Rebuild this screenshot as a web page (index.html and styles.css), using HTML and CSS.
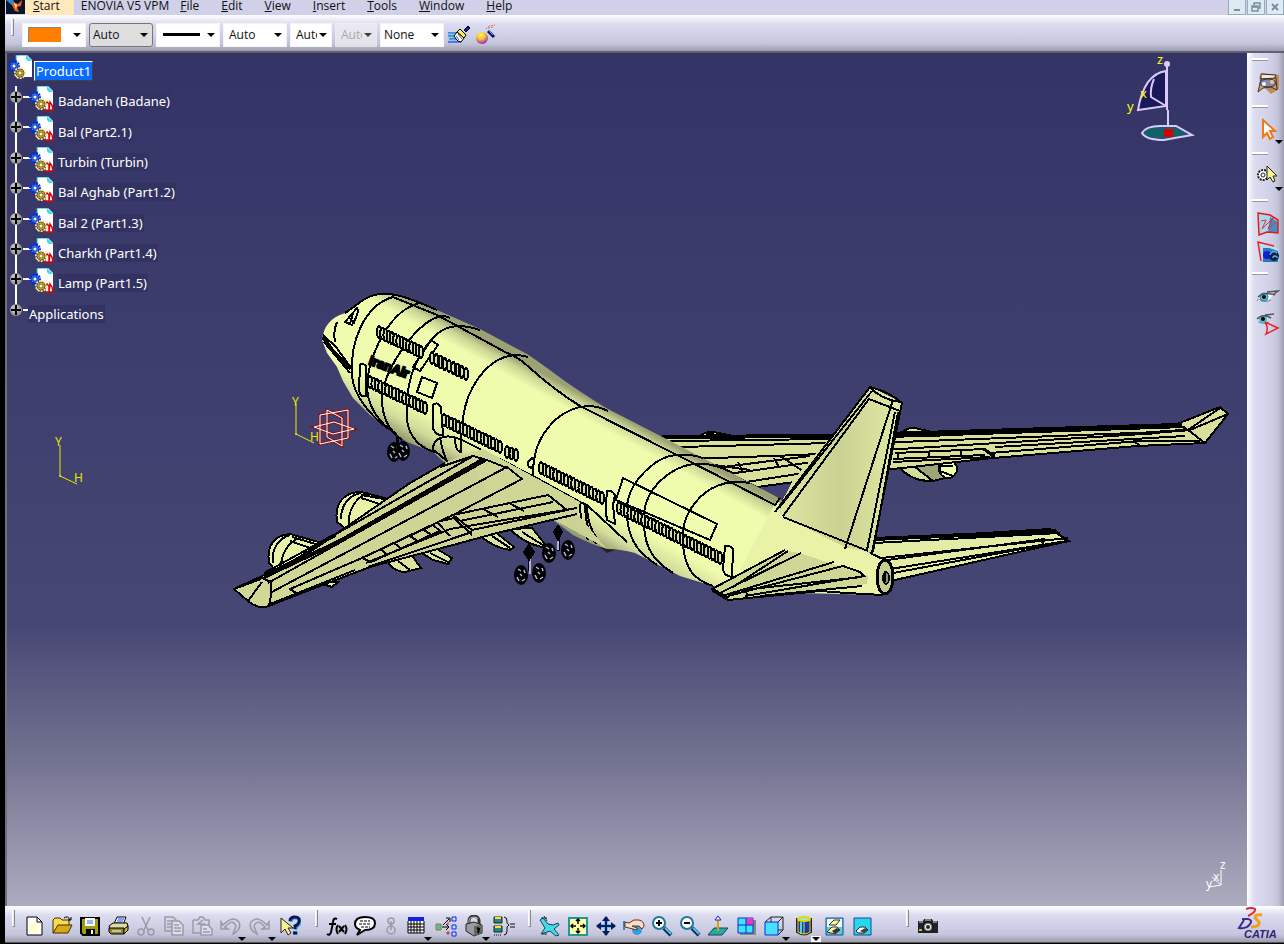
FILE: index.html
```
<!DOCTYPE html>
<html lang="en">
<head>
    <meta charset="UTF-8">
    <meta name="viewport" content="width=device-width, initial-scale=1.0">
    <title>CATIA V5 - Product1</title>
    <link rel="stylesheet" href="styles.css">
</head>
<body>
    <div class="app">
        <header class="menubar">
            <svg class="app-icon" width="19" height="14" viewBox="0 0 19 14">
                <rect width="19" height="14" fill="#08142c"/>
                <path d="M0 0h7l3 5-3 1z" fill="#2a8fd0"/>
                <path d="M7 2l5 2 4-4-1 6-4 1 2 5-4-1-3-6z" fill="#e8621c"/>
                <path d="M8 3l3 2-1 4z" fill="#fff0d0"/>
            </svg>
            <nav class="menu">
                <button class="menu-item start"><u>S</u>tart</button>
                <button class="menu-item enovia">ENOVIA V5 VPM</button>
                <button class="menu-item"><u>F</u>ile</button>
                <button class="menu-item"><u>E</u>dit</button>
                <button class="menu-item"><u>V</u>iew</button>
                <button class="menu-item"><u>I</u>nsert</button>
                <button class="menu-item"><u>T</u>ools</button>
                <button class="menu-item"><u>W</u>indow</button>
                <button class="menu-item"><u>H</u>elp</button>
            </nav>
            <div class="window-buttons">
                <button aria-label="Minimize"><svg width="16" height="13"><path d="M5 9h6" stroke="#7b8ea0" stroke-width="2"/></svg></button>
                <button aria-label="Restore"><svg width="16" height="13"><path d="M6 4V2h6v5h-2M4 5h6v5H4zM4 6h6" fill="none" stroke="#7b8ea0" stroke-width="1.5"/></svg></button>
                <button aria-label="Close"><svg width="16" height="13"><path d="M5 3l6 6M11 3l-6 6" stroke="#7b8ea0" stroke-width="2"/></svg></button>
            </div>
        </header>

        <div class="toolbar">
            <span class="grip"></span>
            <select class="combo fill-color" aria-label="Fill color"><option></option></select>
            <select class="combo raised" aria-label="Transparency"><option>Auto</option></select>
            <select class="combo line-type" aria-label="Line type"><option></option></select>
            <select class="combo" aria-label="Line weight"><option>Auto</option></select>
            <select class="combo narrow" aria-label="Point symbol"><option>Auto</option></select>
            <select class="combo narrow" aria-label="Rendering style" disabled><option>Auto</option></select>
            <select class="combo layer" aria-label="Layer"><option>None</option></select>
            <button class="tool" aria-label="Painter">
                <svg width="24" height="22" viewBox="0 0 24 22">
                    <path d="M1 9h10M1 12h9M2 15h9M1 18h13" stroke="#0020e0" stroke-width="1"/>
                    <path d="M1 10h9M1 13h9M2 16h9" stroke="#20d8f0"/>
                    <path d="M17 6l4-4 2 2-4 4z" fill="#1018c0" stroke="#000"/>
                    <path d="M13 5l6 6-2 3-7-6z" fill="#fff24a" stroke="#000"/>
                    <path d="M10 8l7 6-3 4-3-1-2-2-2-3z" fill="#fff" stroke="#000"/>
                    <path d="M11 10l4 5M9 12l3 4" stroke="#555"/>
                </svg>
            </button>
            <button class="tool" aria-label="Wizard">
                <svg width="24" height="22" viewBox="0 0 24 22">
                    <defs><radialGradient id="ball" cx=".4" cy=".25" r=".8"><stop offset="0" stop-color="#fff36a"/><stop offset=".45" stop-color="#f8c030"/><stop offset="1" stop-color="#8c14d8"/></radialGradient></defs>
                    <circle cx="7" cy="14" r="6" fill="url(#ball)"/>
                    <path d="M13 7l6 6" stroke="#101060" stroke-width="3"/>
                    <path d="M13 6l5 5" stroke="#5a8cf0"/>
                    <path d="M11 5l3-3 6-1M13 4l6-1" stroke="#e07050" stroke-dasharray="2 1" fill="none"/>
                </svg>
            </button>
        </div>

        <main class="workspace">
            <section class="viewport">
                <svg class="scene" viewBox="7 53 1240 853" preserveAspectRatio="xMinYMin slice">
                    <defs>
                        <linearGradient id="body" gradientUnits="userSpaceOnUse" x1="608" y1="409" x2="546" y2="521">
                            <stop offset="0" stop-color="#9ba172"/><stop offset=".06" stop-color="#ccd595"/><stop offset=".15" stop-color="#effcad"/>
                            <stop offset=".7" stop-color="#effcad"/><stop offset=".86" stop-color="#d2db9a"/><stop offset="1" stop-color="#8c9268"/>
                        </linearGradient>
                        <linearGradient id="wing" x1="0" y1="1" x2="1" y2="0"><stop offset="0" stop-color="#d2d997"/><stop offset="1" stop-color="#c8cf91"/></linearGradient>
                        <linearGradient id="fin" x1="0" x2="1"><stop offset="0" stop-color="#dde6a0"/><stop offset=".5" stop-color="#cad292"/><stop offset="1" stop-color="#e0eaa3"/></linearGradient>
                        <g id="wheel"><ellipse rx="7" ry="10" fill="#000"/><path d="M-3-6l3 2M-4 2l2 4M1 6l3-2M3-5l1 3M-1-1l2 2" stroke="#b8b8e0" stroke-width="1.5"/></g>
                    </defs>

                    <!-- far wing -->
                    <g class="edges">
                        <path d="M903 432q6-6 16-3l18 4zM700 436q7-6 18-3l15 3z" fill="#dce5a0"/>
                        <path d="M899 467C908 477 920 483 936 480L945 465Z" fill="#d5dd9a"/>
                        <path d="M915 467l18 14 16-4-9-14z" fill="#9fa574"/>
                        <circle cx="948" cy="469" r="9" fill="#effcad"/>
                        <path d="M940 463v8l13 5M938 466h15"/>
                        <path d="M658 437L827 435L1177 424L1220 407L1228 414L1205 443L1137 446L993 458L893 469L757 487Z" fill="#d8e09b"/>
                        <path d="M1177 424L1188 430L1220 408M1190 430L1228 414M1188 430L1205 443M1190 430L1160 431"/>
                        <path class="heavy" d="M662 437L830 436L895 435L1040 430L1182 425"/>
                        <path class="heavy" d="M900 433l40 2M706 435l30 2"/>
                        <path d="M670 441L830 439L1185 427M680 447L830 443L900 442L1185 431M685 459L800 455L900 449L1160 433M995 447L1185 436M990 453L1140 441L1200 441M895 453L985 449L995 456M893 459L985 455M893 462L990 457M1133 441l8 5M983 449l12 9M929 452v6M961 450v6M898 453v6"/>
                        <path d="M715 468L810 456M728 474L820 461M740 483L810 472M738 462l5 10M774 458l5 9M780 456l23 15M700 463l50 7"/>
                    </g>

                    <!-- far stabilizer -->
                    <g class="edges">
                        <path d="M872 540L1050 529L1069 541L1028 550L895 580L872 577Z" fill="#e2eca5"/>
                        <path class="heavy" d="M874 539L1056 531"/>
                        <path d="M874 543L1060 533M872 559L1068 538M872 562L1045 539M890 569L1067 541M893 573L1038 546M1038 539l6 5M1056 531l10 10"/>
                    </g>

                    <!-- engines and landing gear below the wing -->
                    <g class="edges">
                        <path d="M337 522C334 502 345 492 361 492L396 501L350 532Z" fill="#e7f1a7"/>
                        <path d="M341 519c0-14 8-24 20-26M349 528c-2-15 5-30 19-35M361 495l35 6M361 498l25 8"/>
                        <path d="M269 563C266 544 276 535 290 534L322 543L276 571Z" fill="#e7f1a7"/>
                        <path d="M273 563c-2-14 6-25 17-28M281 568c0-14 6-25 20-31M292 537l27 8M290 541l20 7"/>
                        <path d="M320 583l12 4 6-5z" fill="#e7f1a7"/>
                        <path d="M387 561L410 553L421 568L405 572Q394 572 387 561ZM420 552L432 546L452 558L448 564L433 560ZM480 536L494 531L514 547L510 550Q495 548 480 536ZM510 529L532 528L548 548Q525 545 510 529Z" fill="#dce5a0"/>
                        <path d="M398 561l12 9M430 553l18 9M492 536l18 12M522 532l24 15"/>
                        <path d="M397 434v12M529 545v26M558 527v24" stroke-width="3"/>
                        <path d="M530 556v18M558 540v10" stroke="#b0b0d8"/>
                        <path d="M529 545l5 7-5 8-5-8zM558 526l4 6-4 8-4-8z" fill="#000"/>
                    </g>
                    <use href="#wheel" x="394" y="452"/><use href="#wheel" x="403" y="451"/>
                    <use href="#wheel" x="521" y="575"/><use href="#wheel" x="539" y="573"/>
                    <use href="#wheel" x="549" y="553"/><use href="#wheel" x="568" y="550"/>

                    <!-- fuselage -->
                    <path d="M597 545l10 8 8-3 10-1-4-8z" fill="#222"/>
                    <path fill="url(#body)" d="M322 340C324 326 330 318 345 313C358 305 366 294 383 294C400 293 420 303 437 310L480 329L527 354C548 368 575 390 608 409L680 446L777 497L845 545L885 560L885 595L847 593L713 586L680 576L635 553Q620 549 607 549Q590 544 573 535L540 510L445 463L433 452L407 442L387 428L370 415L353 398L343 381L337 367L327 353Z"/>
                    <path fill="#e8f3a8" d="M777 500L790 515L885 560V595L800 593L740 570Z"/>
                    <g class="edges">
                        <path d="M345 313C358 305 366 294 383 294C400 293 420 303 437 310"/>
                        <path d="M393 297C365 305 350 340 352 375C353 395 370 415 387 428"/>
                        <path d="M420 303C390 310 372 350 367 380C365 405 380 425 397 434"/>
                        <path d="M450 318C428 305 385 365 382 395C381 415 388 430 402 440"/>
                        <path d="M480 330C465 325 447 322 433 338C413 360 405 385 407 420C409 437 420 448 435 452"/>
                        <path d="M528 357C515 353 500 355 485 370C465 392 461 415 461 453"/>
                        <path d="M608 411C590 402 573 405 555 420C537 438 532 455 533 483"/>
                        <path d="M703 458C685 452 665 453 650 467C632 482 625 500 627 518C630 545 642 555 657 565"/>
                        <path d="M733 473C710 461 690 460 670 473C650 487 642 505 644 525C645 550 655 562 673 573"/>
                        <path d="M750 483C728 479 708 486 695 503C683 518 682 530 683 545C685 570 695 580 713 586"/>
                        <path d="M393 297L437 315L507 353Q517 356 530 368Q553 389 580 406L677 455L730 482L775 505L780 498"/>
                        <path d="M462 440L533 476L580 502L587 505L627 542"/>
                        <path d="M337 322q-4 10-2 20M345 322L357 308Q360 312 352 325ZM350 318l4 6M353 313l-3 11"/>
                        <path class="heavy" d="M323 337L332 350L351 369"/>
                        <path d="M323 335L336 347L352 369M324 342L340 361L350 373"/>
                        <path d="M360 365q2-3 6 1v30q-5 2-7-5zM431 340l7 5-18 26-7-4zM422 377l15 6-5 15-15-6zM433 405q4-4 8 2l2 28q-6 1-10-6zM607 491q5-1 8 4l-2 10 2 19-8-4q-2-10 0-29zM623 478L717 524L710 540L616 500ZM725 546q5-1 8 3l-1 28q-8-1-9-8zM528 462a3 5 0 1 0 4-4z"/>
                        <path d="M462 440q-18-8-27 2-5 10 0 9l12 10M440 437q2 15 8 26M455 438q0 12 5 14"/>
                        <path d="M580 502q0 25 8 38M585 504q0 25 11 40M587 504q0 25 15 41M562 521l34 15"/>
                    </g>
                    <g id="cabinWindows" class="cabin-windows"></g>
                    <text class="livery" transform="translate(368 364) rotate(20)">IranAir</text>

                    <!-- near wing -->
                    <g class="edges">
                        <path d="M467 453L445 463L410 483L310 552L260 577L234 589L248 601Q256 608 266 607L320 586L370 567L453 545L497 533L577 514L606 548L540 512Z" stroke="none" fill="url(#wing)"/>
                        <path stroke="none" d="M467 453L483 449L580 502L577 517L500 520Z" fill="#ced696"/>
                        <path d="M445 463L410 483L310 552L260 577L234 589L248 601Q256 608 266 607L320 586L370 567L453 545L497 533L577 514"/>
                        <path class="heavy" d="M264 577L340 541L484 459M310 549L335 535"/>
                        <path d="M440 467L473 456L487 460M268 583L487 460M264 573L345 529L473 456M270 593L507 467M507 467L522 479L453 515L362 558L290 589L296 593M487 460l20 8M260 577l11 5q1 12-2 24M248 601l14-19M234 589l27-10M270 604L355 570"/>
                        <path d="M453 515L548 495L567 510L472 530Z"/>
                        <path d="M460 521L553 502M483 509l15 8M509 503l15 8M437 522l13 14M437 522l17-4 18 17M368 567L472 532M366 563L450 529L577 508"/>
                        <path d="M362 558L433 525L440 531L371 562ZM380 549l8 6M394 543l8 6M410 536l9 6M424 530l9 6M370 562l-8-5"/>
                    </g>

                    <!-- fin -->
                    <g class="edges">
                        <path stroke="none" d="M870 386L902 403L900 412L872 553L845 547L783 517L777 511L793 480L837 430Z" fill="url(#fin)"/>
                        <path d="M775 512L870 387Q890 392 902 403L900 412L872 553M783 516L869 399L900 411M893 400L845 549M783 517L868 551M895 412L867 550M779 508L872 391M870 387q10 12 30 15"/>
                        <path d="M898 412L873 552"/>
                    </g>

                    <!-- near stabilizer and tail cone -->
                    <g class="edges">
                        <path stroke="none" fill="#cfd796" d="M712 589L783 550L800 553L835 565L868 576L867 584L820 590L728 600Z"/>
                        <path d="M870 553L885 560M883 595L847 593L820 591L728 600L712 589L785 550M720 593L801 553M733 587L788 551M722 596L834 562M728 596L843 566L860 572L864 576L745 596M742 590L862 577M744 590l4 5M862 586L760 596"/>
                        <path class="heavy" d="M713 590L728 599"/>
                        <ellipse cx="885" cy="577" rx="8" ry="17" fill="#c6ce90" stroke-width="3"/>
                        <ellipse cx="886" cy="578" rx="3" ry="6" fill="#8f9568"/>
                        <path d="M885 573v9"/>
                    </g>

                    <!-- reference planes and sketch axes -->
                    <g fill="none" stroke="#8c1010" stroke-width="3">
                        <path d="M320 415L348 410V438L320 444ZM327 410L342 418V446L327 437ZM314 427L334 422L354 429L333 434Z"/>
                    </g>
                    <g fill="none" stroke="#fff">
                        <path d="M320 415L348 410V438L320 444ZM327 410L342 418V446L327 437ZM314 427L334 422L354 429L333 434Z"/>
                    </g>
                    <g class="axis">
                        <path d="M296 403V434L314 443M60 445V476L77 484"/>
                        <circle cx="296" cy="434" r="1"/><circle cx="60" cy="476" r="1"/>
                        <text x="292" y="406">Y</text><text x="310" y="441">H</text>
                        <text x="55" y="446">Y</text><text x="74" y="482">H</text>
                    </g>

                    <!-- compass -->
                    <g fill="none" stroke="#dcc8ff" stroke-width="2">
                        <path d="M1166 71Q1144 74 1138 110L1166 106Z" fill="#1a1a58"/>
                        <path d="M1154 79Q1150 88 1151 97L1166 106M1167 65V110M1168 110V128"/>
                        <path d="M1142 133Q1146 126 1160 126L1176 126L1192 135Q1174 138 1164 140Q1146 140 1142 133Z" fill="#146068"/>
                        <circle cx="1167" cy="64" r="3" fill="#dcc8ff" stroke="none"/>
                        <rect x="1164" y="129" width="9" height="8" fill="#d80000" stroke="none"/>
                    </g>
                    <g class="compass-text"><text x="1157" y="64">z</text><text x="1140" y="98">x</text><text x="1127" y="111">y</text></g>
                    <g class="triad"><path d="M1221 870V885L1209 887M1221 885L1212 877"/><text x="1220" y="869">z</text><text x="1213" y="881">x</text><text x="1206" y="888">y</text></g>
                </svg>

                <svg class="defs" width="0" height="0">
                    <defs>
                        <g id="gears">
                            <circle cx="6" cy="11" r="5" fill="none" stroke="#0030e8" stroke-width="2" stroke-dasharray="2 1"/>
                            <circle cx="6" cy="11" r="4" fill="#58b8ff" stroke="#0028d0"/>
                            <path d="M4 9h4v4H4z" fill="#e8ffff" stroke="#0010a0"/>
                            <circle cx="12" cy="18" r="5" fill="none" stroke="#ffe78a" stroke-width="2" stroke-dasharray="2 1"/>
                            <circle cx="12" cy="18" r="4" fill="#ffe890" stroke="#6a5810"/>
                            <path d="M10 16h4v4h-4z" fill="#fff8c0" stroke="#5a4a08"/>
                        </g>
                        <g id="sheet"><path d="M8 0h11l5 5v17H8z" fill="#fff"/><path d="M8 8V0h11" fill="none" stroke="#00b0b8"/><path d="M18 0l6 6h-4l-2-2z" fill="#30e0f0"/></g>
                        <g id="part"><use href="#sheet"/><path d="M16 24v-5l2-3 2 2v6zM20 24l1-8 2 3 1 5z" fill="#fff" stroke="#e00000" stroke-width="1.5"/><use href="#gears"/></g>
                        <g id="node"><circle cx="7" cy="7" r="6" fill="#999"/><circle cx="6" cy="6" r="4" fill="#bbb"/><path d="M7 2v10M2 7h10" stroke="#000" stroke-width="2"/></g>
                    </defs>
                </svg>

                <div class="tree">
                    <div class="tree-root">
                        <svg width="25" height="25" viewBox="1 0 25 25"><use href="#sheet"/><use href="#gears"/></svg>
                        <a href="#product" class="selected">Product1</a>
                    </div>
                    <ul class="tree-list">
                        <li><svg width="48" height="26" viewBox="0 0 48 26"><path d="M14 11h8" stroke="#fff" stroke-width="2"/><use href="#node" y="4"/><use href="#part" x="20"/></svg><a href="#badaneh">Badaneh (Badane)</a></li>
                        <li><svg width="48" height="26" viewBox="0 0 48 26"><path d="M14 11h8" stroke="#fff" stroke-width="2"/><use href="#node" y="4"/><use href="#part" x="20"/></svg><a href="#bal">Bal (Part2.1)</a></li>
                        <li><svg width="48" height="26" viewBox="0 0 48 26"><path d="M14 11h8" stroke="#fff" stroke-width="2"/><use href="#node" y="4"/><use href="#part" x="20"/></svg><a href="#turbin">Turbin (Turbin)</a></li>
                        <li><svg width="48" height="26" viewBox="0 0 48 26"><path d="M14 11h8" stroke="#fff" stroke-width="2"/><use href="#node" y="4"/><use href="#part" x="20"/></svg><a href="#bal-aghab">Bal Aghab (Part1.2)</a></li>
                        <li><svg width="48" height="26" viewBox="0 0 48 26"><path d="M14 11h8" stroke="#fff" stroke-width="2"/><use href="#node" y="4"/><use href="#part" x="20"/></svg><a href="#bal2">Bal 2 (Part1.3)</a></li>
                        <li><svg width="48" height="26" viewBox="0 0 48 26"><path d="M14 11h8" stroke="#fff" stroke-width="2"/><use href="#node" y="4"/><use href="#part" x="20"/></svg><a href="#charkh">Charkh (Part1.4)</a></li>
                        <li><svg width="48" height="26" viewBox="0 0 48 26"><path d="M14 11h8" stroke="#fff" stroke-width="2"/><use href="#node" y="4"/><use href="#part" x="20"/></svg><a href="#lamp">Lamp (Part1.5)</a></li>
                        <li><svg width="19" height="26" viewBox="0 0 19 26"><path d="M14 11h5" stroke="#fff" stroke-width="2"/><use href="#node" y="4"/></svg><a href="#applications">Applications</a></li>
                    </ul>
                </div>
            </section>

            <aside class="sidebar">
                <div class="side-group">
                    <button aria-label="Workbench"><svg width="24" height="24" viewBox="0 0 24 24"><path d="M3 7l3-5 17 2v14l-8 5-6-6z" fill="#c08a50"/><path d="M5 3l15 1-2 4H5z" fill="#eee8e0" stroke="#3a2a20"/><path d="M2 21l3-13 15-1 1 12-6-3-8 1z" fill="#c9a070" stroke="#4a3020"/><ellipse cx="12" cy="12" rx="8" ry="4" fill="#8a86a8" stroke="#3a3040"/><circle cx="8" cy="13" r="2" fill="#fff"/><circle cx="16" cy="11" r="2" fill="#e8c890"/></svg></button>
                </div>
                <div class="side-group">
                    <button aria-label="Select"><svg width="24" height="24" viewBox="0 0 24 24"><path d="M7 2v17l4-4 3 6 3-2-3-6h5z" fill="#fff" stroke="#f07818" stroke-width="2"/></svg><i class="drop"></i></button>
                </div>
                <div class="side-group">
                    <button aria-label="Smart pick"><svg width="24" height="24" viewBox="0 0 24 24"><circle cx="7" cy="10" r="5" fill="#fff" stroke="#222" stroke-width="2" stroke-dasharray="2 1"/><circle cx="7" cy="10" r="2" fill="none" stroke="#222"/><path d="M11 1v14l3-3 3 5 2-1-2-5h4z" fill="#f6f38c" stroke="#222"/></svg><i class="drop"></i></button>
                </div>
                <div class="side-group">
                    <button aria-label="Sketch"><svg width="24" height="24" viewBox="0 0 24 24"><path d="M2 1l12 1 8 6v13l-11-1-8 3z" fill="#a8d8f0"/><path d="M14 5l8 5v11l-10-1z" fill="#4090c8"/><path d="M2 1l12 2 8 5v13l-11-1-8 3z" fill="none" stroke="#e81818" stroke-width="1.5"/><path d="M5 9l5-1-4 9L17 6l-5 11 8-7" fill="none" stroke="#e83030"/></svg></button>
                    <button aria-label="Capture"><svg width="24" height="24" viewBox="0 0 24 24"><path d="M3 3h10l9 6v13H6z" fill="#b8dcf0"/><path d="M5 21L2 2l16 4" fill="none" stroke="#e82020" stroke-width="1.5"/><path d="M7 8h6l9 3v11H7z" fill="#2a78b8"/><circle cx="11" cy="15" r="4" fill="#1020d8"/><circle cx="18" cy="16" r="5" fill="#0c2440"/><path d="M14 15a4 4 0 0 1 7-2M17 18a2 2 0 0 1 4 0" stroke="#60b0e8" stroke-width="1.5" fill="none"/></svg></button>
                </div>
                <div class="side-group">
                    <button aria-label="Hide"><svg width="24" height="24" viewBox="0 0 24 24"><path d="M2 14q6-7 16-5-5 8-15 7z" fill="#fff"/><circle cx="8" cy="12" r="4" fill="#50c8e8" stroke="#2880a0"/><circle cx="8" cy="12" r="2" fill="#000"/><path d="M2 12Q8 6 19 10M11 7l11-1-4 3" fill="none" stroke="#555" stroke-width="1.5"/><path d="M1 16q1-4 4 0 6 2 10-1" fill="none" stroke="#888"/></svg></button>
                    <button aria-label="Swap visible space"><svg width="24" height="24" viewBox="0 0 24 24"><circle cx="7" cy="6" r="4" fill="#40c0e0"/><circle cx="7" cy="6" r="2" fill="#000"/><path d="M1 6Q7 0 15 5M9 2l9-1" fill="none" stroke="#555" stroke-width="1.5"/><path d="M2 9q6 3 11 0" fill="none" stroke="#888"/><path d="M9 9l13 6-12 6q3-6-1-12" fill="none" stroke="#e82020" stroke-width="1.5"/></svg></button>
                </div>
            </aside>
        </main>

        <footer class="bottombar">
            <div class="tools standard">
                <span class="grip"></span>
                <button aria-label="New"><svg viewBox="0 0 22 22"><path d="M4 2h10l5 5v13H4z" fill="#fff" stroke="#000"/><path d="M6 7h9v11H6z" fill="#ffffd0"/><path d="M14 2v5h5" fill="none" stroke="#000"/></svg></button>
                <button aria-label="Open"><svg viewBox="0 0 22 22"><path d="M2 18V5l2-2h5l2 2h7v5" fill="#f8dc48" stroke="#3a3000"/><path d="M2 18L7 10h14l-4 8z" fill="#d8a818" stroke="#3a3000"/><path d="M13 3q4-3 6 2M17 5h3V2" fill="none" stroke="#000"/></svg></button>
                <button aria-label="Save"><svg viewBox="0 0 22 22"><path d="M2 3h18v17H4l-2-2z" fill="#a09c10" stroke="#000" stroke-width="2"/><path d="M6 3h10v8H6z" fill="#fff"/><path d="M8 6h6M8 8h6" stroke="#3070e0"/><path d="M7 14h9v6H7z" fill="#000"/><path d="M12 15h2v4h-2z" fill="#fff"/></svg></button>
                <button aria-label="Print"><svg viewBox="0 0 22 22"><path d="M7 9l3-7h9l-3 8" fill="#fff" stroke="#000"/><path d="M11 4h6M10 6h6M9 8h6" stroke="#1040f0"/><path d="M2 11l4-3h14l1 3-3 4H3z" fill="#e0dca0" stroke="#000"/><path d="M2 13h15v6H4l-2-2z" fill="#8c8830" stroke="#000"/><path d="M17 19l4-4v-4l-4 3z" fill="#c0bc40" stroke="#000"/><path d="M5 16h9" stroke="#fff"/></svg></button>
                <button aria-label="Cut" disabled><svg class="dim" viewBox="0 0 22 22"><path d="M7 2l6 13M15 2L9 15"/><circle cx="6" cy="17" r="3"/><circle cx="16" cy="17" r="3"/></svg></button>
                <button aria-label="Copy" disabled><svg class="dim" viewBox="0 0 22 22"><path d="M2 2h8l3 3v11H2zM4 6h5M4 9h5M4 12h5"/><path d="M9 6h7l4 4v10H9zM11 10h5M11 13h7M11 16h7" fill="#dcdcec"/></svg></button>
                <button aria-label="Paste" disabled><svg class="dim" viewBox="0 0 22 22"><path d="M2 5h5l2-3h3l2 3h4v5M2 5v13h8M12 5l-5 4h7"/><path d="M10 10h7l4 4v6H10zM12 14h4M12 17h7" fill="#dcdcec"/></svg></button>
                <button class="wide" aria-label="Undo" disabled><svg class="dim" viewBox="0 0 22 22"><path d="M2 7v7h7l-3-2q8-9 11-1l-3 8q9-5 6-12-6-7-16 3z"/></svg><i class="drop"></i></button>
                <button class="wide" aria-label="Redo" disabled><svg class="dim" viewBox="0 0 22 22"><path d="M20 7v7h-7l3-2Q8 3 5 11l3 8Q-1 14 2 7q6-7 16 3z"/></svg><i class="drop"></i></button>
                <button aria-label="What's this"><svg viewBox="0 0 22 22"><path d="M2 3v15l4-4 3 6 3-2-3-5h5z" fill="#f8f090" stroke="#222"/><path d="M12 7q0-4 5-4t4 5q-1 3-4 4v3M15 18h4" fill="none" stroke="#30b8c8" stroke-width="3"/><path d="M11 6q0-4 5-4t4 5q-1 3-4 4v3M14 18h4" fill="none" stroke="#101060" stroke-width="3"/></svg></button>
            </div>
            <div class="tools knowledge">
                <span class="grip"></span>
                <button aria-label="Formula"><svg viewBox="0 0 22 22"><path d="M11 4q-4-2-4 4L5 17q-1 4-4 2M3 9h7M12 10q-3 4 0 9M19 10q3 4 0 9M13 11l5 6M18 11l-5 6" fill="none" stroke="#000" stroke-width="2"/></svg></button>
                <button aria-label="Comment"><svg viewBox="0 0 22 22"><path d="M11 2C4 2 1 5 1 9s3 5 5 6l-3 5 8-5c7 0 10-3 10-7s-4-6-10-6z" fill="#fff" stroke="#000" stroke-width="2"/><path d="M6 6h10M5 9h12M7 12h9" stroke="#000" stroke-dasharray="3 1"/></svg></button>
                <button class="slim" aria-label="Link" disabled><svg class="dim" viewBox="0 0 22 22"><circle cx="11" cy="6" r="3"/><circle cx="11" cy="15" r="4"/><path d="M11 6v9"/></svg></button>
                <button class="wide" aria-label="Design table"><svg viewBox="0 0 22 22"><path d="M3 2h16v4H3z" fill="#1020e8"/><path d="M3 6h16v12H3z" fill="#fff"/><path d="M3 6v12h16V6M3 9h16M3 12h16M3 15h16M6 6v12M9 6v12M12 6v12M15 6v12" stroke="#000" fill="none"/></svg><i class="drop"></i></button>
                <button aria-label="Relations"><svg viewBox="0 0 22 22"><path d="M1 9h5v6H1z" fill="#48c0c0" stroke="#a08010"/><path d="M7 12h6M8 10l6-6M11 3h4v4M11 9l3 3-3 3" fill="none" stroke="#000"/><path d="M17 2h4v4h-4zM17 10h4v4h-4zM17 17h4v4h-4z" fill="#b8e8ff" stroke="#1020e8"/><path d="M13 7v3M13 16v4M11 18h4" stroke="#d02020"/></svg></button>
                <button class="wide" aria-label="Lock"><svg viewBox="0 0 22 22"><path d="M6 9V5q1-4 5-4t5 4v4" fill="none" stroke="#333" stroke-width="3"/><path d="M6 8V5q1-3 5-3t4 2" fill="none" stroke="#bbb"/><path d="M3 9l8-2 8 3v8l-8 3-8-5z" fill="#9c9c9c" stroke="#222"/><path d="M11 11v10l8-3v-8z" fill="#666"/><path d="M14 13l2 1-1 4" stroke="#000" stroke-width="2" fill="none"/></svg><i class="drop"></i></button>
                <button aria-label="Equivalent"><svg viewBox="0 0 22 22"><path d="M1 2h8v6H1zM1 11h8v6H1z" fill="#208888" stroke="#222"/><path d="M2 3h6M2 12h6" stroke="#ffe020" stroke-width="2"/><path d="M1 20h8" stroke="#000" stroke-dasharray="1 1"/><path d="M11 2q3 0 3 4v2l2 2-2 2v4q0 4-3 4M17 9h5M17 12h5" fill="none" stroke="#111"/></svg></button>
            </div>
            <div class="tools views">
                <span class="grip"></span>
                <button aria-label="Fly"><svg viewBox="0 0 22 22"><path d="M1 5l3-2 5 6 5 1 5-2 1 2-5 4 5 6-3 1-6-5-9 3 4-6z" fill="#48d8e8" stroke="#104860"/><path d="M2 3h6M5 1l3 5M3 19h5" stroke="#224" fill="none"/></svg></button>
                <button aria-label="Fit all in"><svg viewBox="0 0 22 22"><path d="M2 3h18v17H2z" fill="#ffffa8" stroke="#209898" stroke-width="2"/><path d="M11 9V4M11 13v5M9 11H4M13 11h5M9 6l2-2 2 2M9 16l2 2 2-2M6 9l-2 2 2 2M16 9l2 2-2 2" fill="none" stroke="#000" stroke-width="1.5"/></svg></button>
                <button aria-label="Pan"><svg viewBox="0 0 22 22"><path d="M11 2v18M2 11h18" stroke="#58c8f0" stroke-width="4"/><path d="M11 3v16M3 11h16" stroke="#101858" stroke-width="2"/><path d="M7 6l4-5 4 5zM7 16l4 5 4-5zM6 7l-5 4 5 4zM16 7l5 4-5 4z" fill="#101858"/></svg></button>
                <button aria-label="Rotate"><svg viewBox="0 0 22 22"><circle cx="14" cy="15" r="5" fill="#30a0e0"/><path d="M1 6v9" stroke="#2090c8" stroke-width="2"/><path d="M2 7l4 1 5-3h5q5 1 5 6l-2 3-3-3H9l5 2v2l-4-1-8-2z" fill="#f8ddc8" stroke="#6a3020"/></svg></button>
                <button aria-label="Zoom in"><svg viewBox="0 0 22 22"><path d="M13 13l7 7" stroke="#102060" stroke-width="4"/><path d="M14 13l6 6" stroke="#48c8e0" stroke-width="2"/><circle cx="8" cy="8" r="6" fill="#fff" stroke="#207898" stroke-width="2"/><path d="M8 5v6M5 8h6" stroke="#000" stroke-width="2"/></svg></button>
                <button aria-label="Zoom out"><svg viewBox="0 0 22 22"><path d="M13 13l7 7" stroke="#102060" stroke-width="4"/><path d="M14 13l6 6" stroke="#48c8e0" stroke-width="2"/><circle cx="8" cy="8" r="6" fill="#fff" stroke="#207898" stroke-width="2"/><path d="M5 8h6" stroke="#000" stroke-width="2"/></svg></button>
                <button aria-label="Normal view"><svg viewBox="0 0 22 22"><path d="M7 13h14l-6 7H1z" fill="#28a8a8" stroke="#104848"/><path d="M11 16V4" stroke="#e0a000" stroke-width="2"/><path d="M8 5l3-4 3 4z" fill="#fff" stroke="#1020d0"/></svg></button>
                <button aria-label="Multi-view"><svg viewBox="0 0 22 22"><path d="M5 5h16v15H5z" fill="#888"/><path d="M3 3h15v15H3z" fill="#38e8f8" stroke="#1028d8"/><path d="M11 3h7v7h-7z" fill="#e040c0"/><path d="M11 3v15M3 10h15" stroke="#1028d8"/></svg></button>
                <button class="wide" aria-label="Isometric view"><svg viewBox="0 0 22 22"><path d="M2 7l6-5h12v13l-5 5M8 2v5M15 7l5-5M15 15h5" fill="none" stroke="#222"/><path d="M2 7h13v13H2z" fill="#48e0ff" stroke="#1028d8"/></svg><i class="drop"></i></button>
                <button class="wide shaded" aria-label="Shading with edges"><svg viewBox="0 0 22 22"><path d="M4 4v13q7 5 14 0V4z" fill="#1838b8" stroke="#222" stroke-width="2"/><path d="M8 7v12" stroke="#40d8f0" stroke-width="2"/><ellipse cx="11" cy="4" rx="6" ry="2" fill="#90e8f8" stroke="#e8d800" stroke-width="2"/><path d="M5 5v12q6 4 12 0V5M11 7v12" fill="none" stroke="#f0e000"/></svg><i class="drop"></i></button>
                <button aria-label="Hide or show"><svg viewBox="0 0 22 22"><path d="M3 3h17v17H3z" fill="#50d0d8" stroke="#1848a0"/><path d="M4 4h15v8H4z" fill="#f0fce8"/><path d="M6 10l5-5h6l-4 5zM4 17l5-5h5l3 3-5 4z" fill="#fff0a0" stroke="#333"/><path d="M9 16l5-3 3 2-5 4z" fill="#333"/></svg></button>
                <button aria-label="Visible space"><svg viewBox="0 0 22 22"><path d="M3 3h17v17H3z" fill="#28d8e8" stroke="#1848a0"/><path d="M5 16l4-4h5l3 3-4 3H7z" fill="#fff" stroke="#222"/><path d="M9 16l5-3 3 2-4 3z" fill="#444"/></svg></button>
            </div>
            <div class="tools capture">
                <span class="grip"></span>
                <button aria-label="Camera"><svg viewBox="0 0 22 22"><path d="M1 6h5l1-2h8l1 2h5v12H1z" fill="#222"/><path d="M2 7h4M8 5h6M16 7h4" stroke="#ddd"/><circle cx="11" cy="12" r="5" fill="#777" stroke="#000"/><circle cx="11" cy="12" r="3" fill="#fff"/><circle cx="11" cy="12" r="2" fill="#222"/><path d="M2 15h3" stroke="#ccb060" stroke-width="2"/></svg></button>
            </div>
            <svg class="brand" width="44" height="36" viewBox="0 0 44 36">
                <path d="M9 3q6-2 9 0 1 3-7 7" fill="none" stroke="#e02838" stroke-width="2"/>
                <path d="M5 13h6q5 1 2 5-3 5-11 4l5-8" fill="none" stroke="#402c90" stroke-width="2"/>
                <path d="M25 9q-7-1-7 3l4 4q1 5-8 5" fill="none" stroke="#f0a018" stroke-width="3"/>
                <text x="7" y="32">CATIA</text>
            </svg>
        </footer>
    </div>

    <script>
        // Rows of cabin windows: start x/y, end x/y, count
        const rows = [
            [379, 332, 421, 352, 14],
            [432, 358, 466, 374, 9],
            [370, 382, 425, 408, 17],
            [444, 420, 500, 447, 17],
            [507, 452, 516, 455, 3],
            [541, 468, 602, 498, 18],
            [619, 508, 720, 558, 30]
        ];
        const cabin = document.getElementById('cabinWindows');

        rows.forEach(([x1, y1, x2, y2, count]) => {
            for (let i = 0; i < count; i++) {
                const t = i / (count - 1);
                const pane = document.createElementNS('http://www.w3.org/2000/svg', 'ellipse');
                pane.setAttribute('cx', x1 + (x2 - x1) * t);
                pane.setAttribute('cy', y1 + (y2 - y1) * t);
                pane.setAttribute('rx', 2);
                pane.setAttribute('ry', 6);
                cabin.appendChild(pane);
            }
        });
    </script>
</body>
</html>
```
FILE: styles.css
```
* {
    margin: 0;
    padding: 0;
    box-sizing: border-box;
}

body {
    font-family: "Open Sans", "Noto Sans", sans-serif;
    font-size: 12px;
    color: #111;
    background: #000;
}

button {
    font: inherit;
    color: inherit;
    background: none;
    border: none;
}

svg {
    display: block;
}

.app {
    display: flex;
    flex-direction: column;
    min-height: 100vh;
    padding-left: 5px;
    padding-bottom: 1px;
}

/* Menu bar */
.menubar {
    display: flex;
    height: 15px;
    padding-left: 1px;
    background: #d0d0e8;
}

.menu {
    display: flex;
    flex: 1;
}

.menu-item {
    padding: 0 11px 3px;
    line-height: 12px;
    white-space: nowrap;
}

.menu-item u {
    text-underline-offset: 1px;
}

.menu-item.start {
    padding-left: 8px;
    padding-right: 14px;
    background: #ffe8bc;
}

.menu-item.enovia {
    padding-left: 7px;
    padding-right: 0;
}

.window-buttons {
    display: flex;
    gap: 1px;
}

.window-buttons button {
    width: 18px;
    height: 15px;
    background: #dceaf4;
    border: 1px solid #98aabb;
    border-top: none;
}

/* Graphic properties */
.toolbar {
    display: flex;
    align-items: center;
    gap: 3px;
    height: 36px;
    padding: 3px 0 0 6px;
    background: linear-gradient(#fff, #dcdcf0 25%, #cdcde5 60%, #c4c4da 80%, #9c9cae);
}

.grip {
    width: 3px;
    height: 17px;
    background: #e8e8f2;
    border-right: 1px solid #888;
    border-bottom: 1px solid #888;
    border-left: 1px solid #fff;
}

.toolbar .grip {
    align-self: flex-start;
    margin: 1px 5px 0 0;
}

.combo {
    appearance: none;
    width: 64px;
    height: 24px;
    padding: 0 20px 0 5px;
    font: inherit;
    color: #111;
    border: 1px solid #f4f4fa;
    border-radius: 0;
    background: #fff url("data:image/svg+xml,%3Csvg xmlns='http://www.w3.org/2000/svg' width='8' height='4'%3E%3Cpath d='M0 0h8L4 4z'/%3E%3C/svg%3E") no-repeat right 4px center;
}

.combo.raised {
    padding-left: 3px;
    border: 1px solid #777;
    border-radius: 3px;
    background-color: #dedede;
}

.combo.fill-color {
    background-image: url("data:image/svg+xml,%3Csvg xmlns='http://www.w3.org/2000/svg' width='8' height='4'%3E%3Cpath d='M0 0h8L4 4z'/%3E%3C/svg%3E"), linear-gradient(#ff8000, #ff8000), linear-gradient(#888, #888);
    background-repeat: no-repeat;
    background-position: right 4px center, 6px 4px, 5px 3px;
    background-size: 8px 4px, 32px 14px, 33px 15px;
}

.combo.line-type {
    background-image: url("data:image/svg+xml,%3Csvg xmlns='http://www.w3.org/2000/svg' width='8' height='4'%3E%3Cpath d='M0 0h8L4 4z'/%3E%3C/svg%3E"), linear-gradient(#000, #000);
    background-repeat: no-repeat;
    background-position: right 4px center, 6px center;
    background-size: 8px 4px, 37px 3px;
}

.combo.narrow {
    width: 42px;
    padding-right: 14px;
    text-overflow: clip;
}

.combo:disabled {
    color: #999;
    background-color: #f0f0f0;
    opacity: 0.7;
}

.combo.layer {
    padding-left: 3px;
}

.tool {
    width: 25px;
}

/* Workspace */
.workspace {
    display: flex;
    flex: 1;
    border-top: 2px solid #606070;
}

.viewport {
    position: relative;
    flex: 1;
    border-left: 2px solid #707078;
    background: linear-gradient(#333366, #474775 67%, #70708f 82%, #acacc0);
    overflow: hidden;
}

.scene {
    position: absolute;
    inset: 0;
    width: 100%;
    height: 100%;
}

.defs {
    position: absolute;
}

.edges {
    fill: none;
    stroke: #000;
    stroke-width: 2;
    shape-rendering: crispEdges;
}

.heavy {
    stroke-width: 4;
}

.cabin-windows {
    fill: #d8e19d;
    stroke: #000;
    stroke-width: 2;
    shape-rendering: crispEdges;
}

.livery {
    font: bold 13px "Liberation Sans", sans-serif;
    stroke: #000;
    stroke-width: 2;
}

.axis {
    fill: #e8e800;
    font: 12px "Noto Sans", sans-serif;
}

.axis path {
    fill: none;
    stroke: #e8e800;
}

.compass-text {
    fill: #ffff00;
    font: 13px "Noto Sans", sans-serif;
}

.triad {
    fill: #fff;
    font: 12px "Noto Sans", sans-serif;
}

.triad path {
    fill: none;
    stroke: #fff;
}

/* Specification tree */
.tree {
    position: relative;
    padding: 2px 0 0 2px;
    font-family: "Noto Sans", sans-serif;
    font-size: 13px;
    line-height: 18px;
}

.tree a {
    color: #fff;
    text-decoration: none;
}

.tree-root {
    display: flex;
    align-items: center;
    height: 31px;
}

.tree-root svg {
    align-self: flex-start;
}

.tree-root .selected {
    padding: 0 1px;
    background: #0a6cff;
    border: 1px solid #fff;
    border-right-color: #444;
    border-bottom-color: #444;
}

.tree-list {
    display: grid;
    grid-auto-rows: 1fr;
    height: 243px;
    list-style: none;
    background: linear-gradient(#fff, #fff) no-repeat 6px 0 / 2px 223px;
}

.tree-list li {
    display: flex;
    align-items: center;
}

.tree-list svg {
    align-self: flex-start;
}

.tree-list a {
    padding: 0 1px;
    background: #333363;
}

/* Right toolbar */
.sidebar {
    display: flex;
    flex-direction: column;
    width: 37px;
    padding: 5px 0 0 5px;
    background: linear-gradient(90deg, #fff, #dcdcf0 20%, #cdcde5 70%, #c0c0d6 85%, #9c9cb0);
}

.side-group {
    padding: 9px 0 6px 2px;
    min-height: 47px;
}

.side-group::before {
    content: "";
    display: block;
    width: 16px;
    height: 2px;
    margin: -9px 0 8px -2px;
    background: #fff;
    border-bottom: 1px solid #999;
}

.side-group button {
    position: relative;
    display: block;
    width: 29px;
    height: 28px;
}

.side-group svg {
    margin-left: 2px;
}

.drop {
    position: absolute;
    right: 0;
    bottom: 0;
    border: 4px solid transparent;
    border-top-color: #000;
    border-bottom: none;
}

/* Bottom toolbar */
.bottombar {
    display: flex;
    align-items: center;
    height: 37px;
    border-bottom: 1px solid #555;
    background: linear-gradient(#fff, #dcdcf0 25%, #cdcde5 60%, #c4c4da 80%, #9c9cae);
}

.tools {
    display: flex;
    align-items: center;
    padding-top: 4px;
}

.tools .grip {
    align-self: flex-start;
    margin-right: 5px;
}

.tools button {
    position: relative;
    display: flex;
    align-items: center;
    width: 28px;
    height: 32px;
    padding-left: 3px;
}

.tools button.wide {
    width: 30px;
}

.tools button.slim {
    width: 23px;
    padding-left: 1px;
}

.tools button svg {
    width: 22px;
    height: 22px;
    flex: none;
}

.tools .drop {
    bottom: 1px;
}

.tools .shaded .drop {
    outline: 1px solid #fff;
    background: #fff;
}

.standard {
    margin-left: 7px;
}

.knowledge {
    margin-left: 11px;
}

.views {
    margin-left: 10px;
}

.capture {
    margin-left: 30px;
}

.dim {
    fill: none;
    stroke: #9a9aa6;
    stroke-width: 1.5;
}

.brand {
    margin-left: auto;
    margin-right: 3px;
}

.brand text {
    font: italic bold 11px "Liberation Sans", sans-serif;
    fill: #2c2478;
}
```
